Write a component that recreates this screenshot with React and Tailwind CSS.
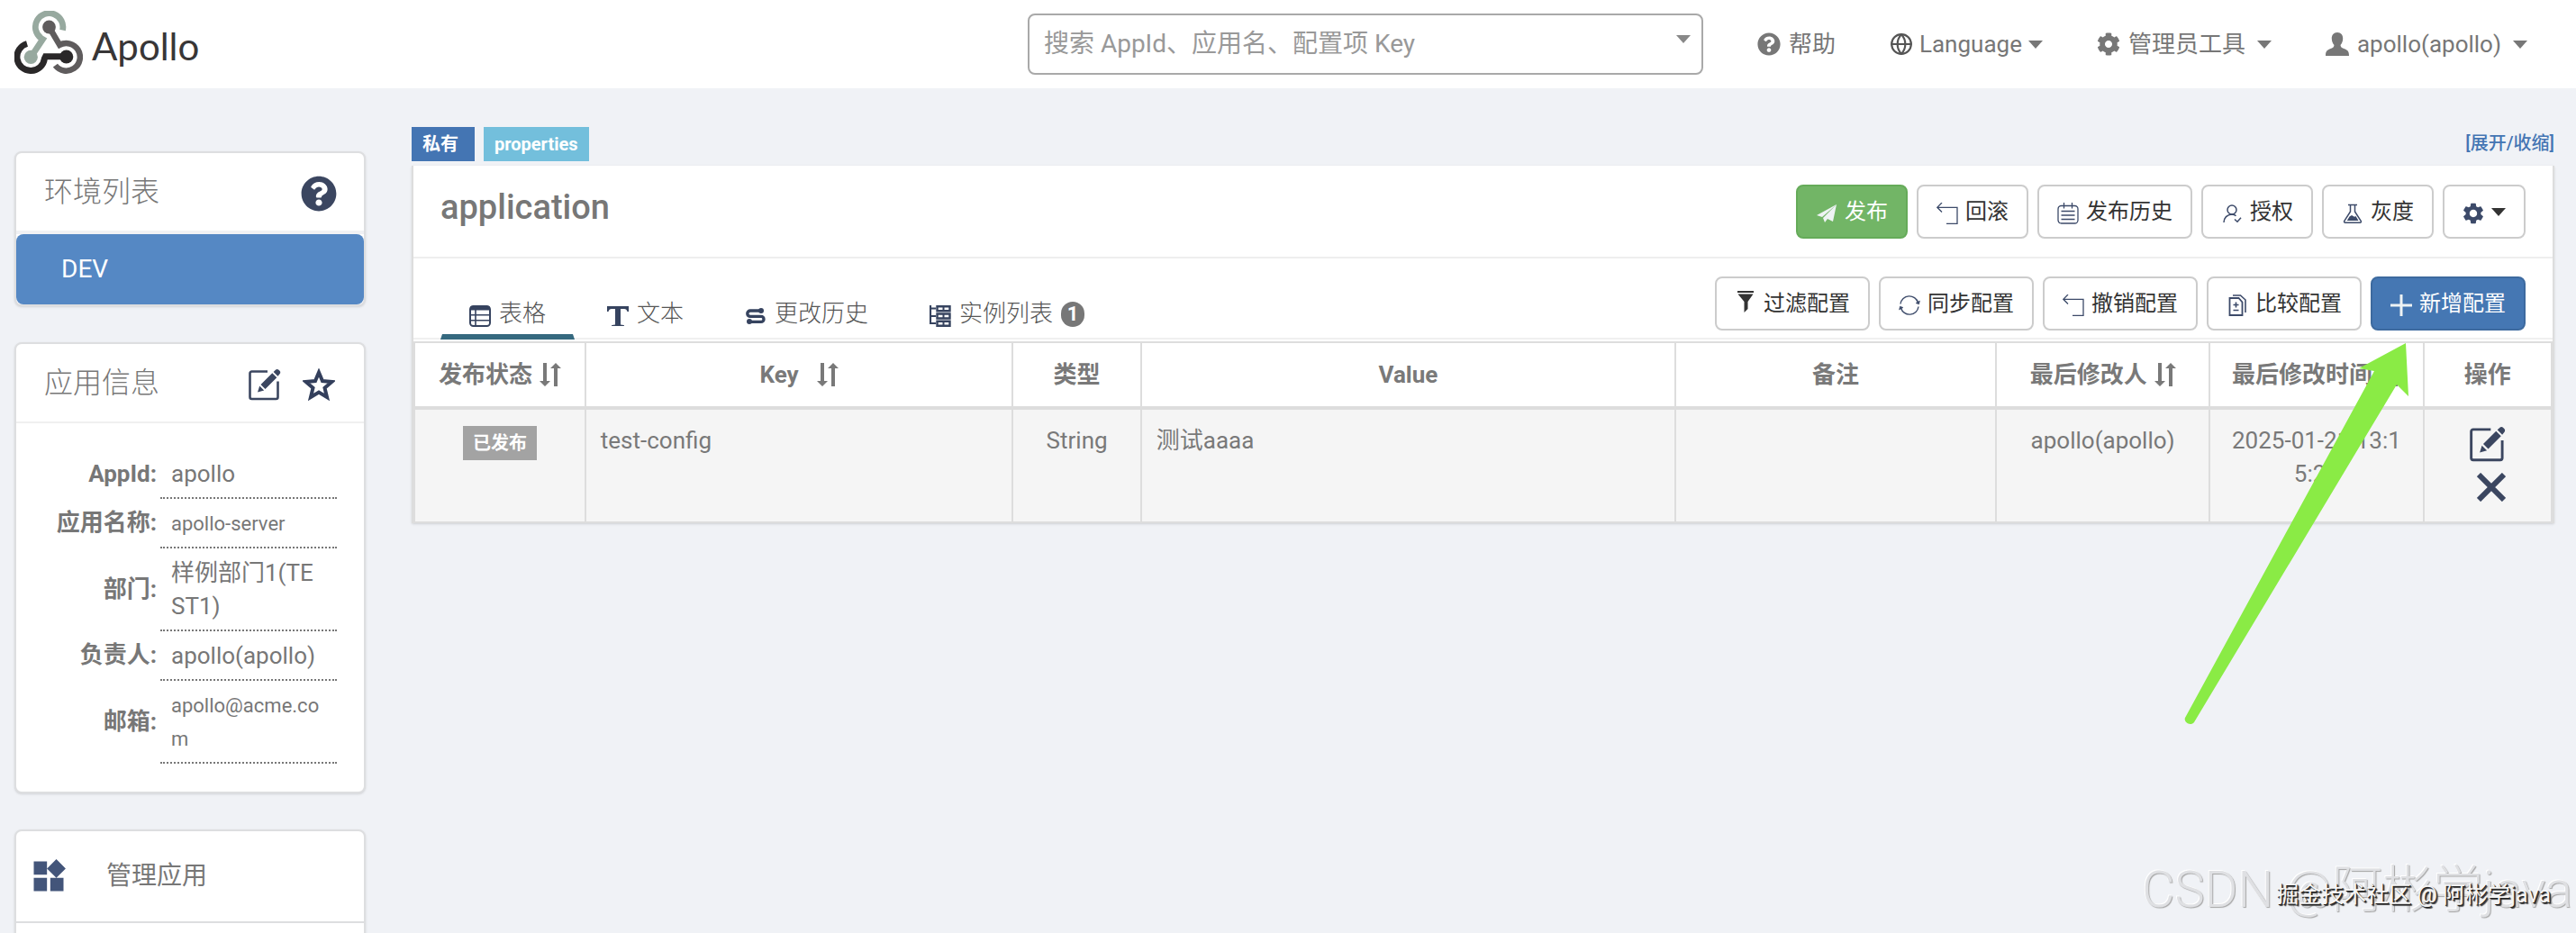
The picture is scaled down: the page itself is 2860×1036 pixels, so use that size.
import clsx from 'clsx';
import { Globe } from 'lucide-react';
import { FaCog, FaQuestionCircle } from 'react-icons/fa';
import { MdSettings, MdWidgets } from 'react-icons/md';

const Svg = ({ children, className = 'w-6 h-6', viewBox = '0 0 24 24' }) => (
    <svg viewBox={viewBox} className={clsx('shrink-0', className)} fill="none" stroke="currentColor" aria-hidden="true">
        {children}
    </svg>
);

const Caret = () => (
    <Svg viewBox="0 0 16 9" className="w-4 h-[9px]">
        <path d="M0 0h16L8 9z" fill="currentColor" stroke="none" />
    </Svg>
);

const Logo = () => (
    <Svg viewBox="0 0 76 70" className="w-[76px] h-[70px]">
        <path d="M14 36.5A15.3 15.3 0 1 0 33.4 53L34.5 50.8H57.7" stroke="#2a2829" strokeWidth="7" />
        <circle cx="57.7" cy="51" r="7.6" fill="#2a2829" stroke="none" />
        <path d="M45.4 60.6A15.3 15.3 0 1 0 50.2 37.9L38.5 18" stroke="#5f5c5d" strokeWidth="6.5" />
        <circle cx="38.5" cy="18" r="7.4" fill="#5f5c5d" stroke="none" />
        <path d="M53.5 21.5A15.3 15.3 0 1 0 29.5 30.3L31.5 31.5L18.3 51.3" stroke="#97a99f" strokeWidth="6.8" />
        <circle cx="18.3" cy="51.3" r="7.6" fill="#97a99f" stroke="none" />
    </Svg>
);

const UserIcon = () => (
    <Svg viewBox="0 0 26 26" className="w-[26px] h-[26px]">
        <path d="M13 0c4 0 6.4 3 6.2 7-.1 3-1.200 5.400-2.700 7 .2 2.400 1.500 3.200 4.500 4.300C24.500 19.800 26 21 26 26H0c0-5 1.500-6.200 5-7.700 3-1.100 4.300-1.900 4.500-4.300C8 12.400 6.900 10 6.800 7 6.600 3 9 0 13 0z" fill="currentColor" stroke="none" />
    </Svg>
);

const EditIcon = ({ className }) => (
    <Svg viewBox="0 0 36 36" className={className}>
        <path d="M21 3.500H3.500a2 2 0 0 0-2 2V32a2 2 0 0 0 2 2h27a2 2 0 0 0 2-2V14.500" strokeWidth="2.600" />
        <path d="M10 26.500l2.200-7 5 5zM13.500 18L26.300 5.200l5 5L18.500 23zM27.600 3.900l2.300-2.200c1-1 2.600-1 3.600 0l1 1c1 1 1 2.500 0 3.500l-2 2.600z" fill="currentColor" stroke="none" />
    </Svg>
);

const StarIcon = () => (
    <Svg viewBox="0 0 36 36" className="w-9 h-9">
        <path d="M18 4.500l4 9.600 10.500.8-8 6.900 2.500 10.200-9-5.500-9 5.500 2.500-10.200-8-6.900 10.500-.8z" strokeWidth="4" />
    </Svg>
);

const CloseIcon = () => (
    <Svg viewBox="0 0 32 32" className="w-8 h-8">
        <path d="M2 2l28 28M30 2L2 30" strokeWidth="6" />
    </Svg>
);

const SendIcon = () => (
    <Svg>
        <path d="M23 2L1 14l6 2zM23 2L8 17l2 5 3-4 6 3z" fill="currentColor" stroke="none" />
    </Svg>
);

const UndoIcon = () => (
    <Svg>
        <path d="M6 0L.8 5.300 6 10.500M1 5.300h22v18H11" strokeWidth="1.300" />
    </Svg>
);

const HistoryIcon = () => (
    <Svg>
        <rect x="1" y="3.500" width="22" height="19.500" rx="3.500" strokeWidth="1.300" />
        <path d="M7.500 0v6.500M16.500 0v6.500M4.500 9.500h15M4.500 14h15M4.500 18.500h15" strokeWidth="1.300" />
    </Svg>
);

const GrantIcon = () => (
    <Svg>
        <circle cx="12" cy="8" r="5" strokeWidth="1.500" />
        <path d="M3 22c.3-5 3-8.500 9-9 2 0 3.500.7 4.500 1.800M15 18.500l3 2.800 4-4.500" strokeWidth="1.500" />
    </Svg>
);

const FlaskIcon = () => (
    <Svg>
        <path d="M7 2.500h10M9.500 3v7L2.800 20.300c-.6 1 0 1.900 1 1.900h16.400c1 0 1.600-.9 1-1.900L14.500 10V3" strokeWidth="1.500" />
        <path d="M8.500 15.500l2.500-1.500 3 1.800 1.500-.8 3 5H5.800z" fill="currentColor" stroke="none" />
    </Svg>
);

const FilterIcon = () => (
    <Svg className="w-6 h-6 -mt-2 text-[#333]">
        <path d="M3 0h18v2H3zM3.500 3.500h17L14.500 12v8l-4 4V12z" fill="currentColor" stroke="none" />
    </Svg>
);

const SyncIcon = () => (
    <Svg>
        <path d="M2 10.500A10 10 0 0 1 21.500 9M22 13.500A10 10 0 0 1 2.500 15" strokeWidth="1.400" />
        <path d="M23.500 7l-1 4-3.500-1.500zM.5 17l1-4L5 14.500z" fill="currentColor" strokeWidth=".5" />
    </Svg>
);

const CompareIcon = () => (
    <Svg>
        <path d="M3.500 4h10l4 4.500V23h-14z" strokeWidth="1.800" />
        <path d="M7 1h8.500l5.500 5v14M10.500 8.500v6M7.500 11.500h6M7.500 17.500h6" strokeWidth="1.600" />
    </Svg>
);

const PlusIcon = () => (
    <Svg>
        <path d="M12 0v24M0 12h24" strokeWidth="3" />
    </Svg>
);

const TableIcon = () => (
    <Svg>
        <rect x="1" y="1" width="22" height="22" rx="3.500" strokeWidth="2" />
        <path d="M1 1.500h22v4H1z" fill="currentColor" stroke="none" />
        <path d="M7 5v18M1 10.800h22M1 16.800h22" strokeWidth="1.600" />
    </Svg>
);

const TextIcon = () => (
    <Svg>
        <path d="M0 1h24v6h-1.500c-.6-2-1.500-3-3.500-3h-4v17.500c1.500.2 2.500.5 4 .8V23H5v-.7c1.500-.3 2.500-.6 4-.8V4H5C3 4 2.100 5 1.500 7H0z" fill="currentColor" stroke="none" />
    </Svg>
);

const ChangeIcon = () => (
    <Svg>
        <path d="M18 6H6a3.200 3.200 0 0 0 0 6.400h12a3 3 0 0 1 0 6H5" strokeWidth="3.400" />
        <circle cx="18" cy="6" r="3" fill="currentColor" stroke="none" />
        <circle cx="5" cy="18" r="3" fill="currentColor" stroke="none" />
    </Svg>
);

const InstanceIcon = () => (
    <Svg>
        <path d="M1 0v21M1 3.500h6M1 12h6M1 20h6" strokeWidth="2.200" />
        <path d="M8.500 1.200h14v5h-14zM8.500 9.500h14v5h-14zM8.500 17.800h14v5h-14z" strokeWidth="2.400" />
        <path d="M15.500 1v5M15.500 9v6M15.500 17v6" strokeWidth="2" />
    </Svg>
);

const SortIcon = () => (
    <Svg viewBox="0 0 24 26" className="w-6 h-[26px]">
        <path d="M4 0h4v20h4l-6 6-6-6h4zM16 26h4V6h4l-6-6-6 6h4z" fill="currentColor" stroke="none" />
    </Svg>
);

const APP_INFO = [
    { label: 'AppId:', value: 'apollo' },
    { label: '应用名称:', value: 'apollo-server', small: true },
    { label: '部门:', value: '样例部门1(TEST1)' },
    { label: '负责人:', value: 'apollo(apollo)' },
    { label: '邮箱:', value: 'apollo@acme.com', small: true },
];

const TABS = [
    { name: '表格', icon: <TableIcon />, active: true },
    { name: '文本', icon: <TextIcon /> },
    { name: '更改历史', icon: <ChangeIcon /> },
    { name: '实例列表', icon: <InstanceIcon />, badge: 1 },
];

const COLUMNS = [
    { name: '发布状态', width: 'w-[8%]', gap: 'gap-2', sort: true },
    { name: 'Key', width: 'w-[20%]', gap: 'gap-5', sort: true },
    { name: '类型', width: 'w-[6%]' },
    { name: 'Value', width: 'w-[25%]' },
    { name: '备注', width: 'w-[15%]' },
    { name: '最后修改人', width: 'w-[10%]', gap: 'gap-2', sort: true },
    { name: '最后修改时间', width: 'w-[10%]', gap: 'gap-2', sort: true },
    { name: '操作', width: 'w-[6%]' },
];

const BUTTON_STYLES = {
    default: 'bg-white border-[#ccc] text-[#333]',
    success: 'bg-[#72b566] border-[#65ab59] text-white',
    primary: 'bg-[#4577b3] border-[#3d6a9f] text-white',
};

function Button({ icon, children, variant = 'default', label }) {
    return (
        <button
            type="button"
            aria-label={label}
            className={clsx(
                'flex items-center gap-2 h-[60px] px-5 rounded-lg border-2 text-[24px] leading-8 whitespace-nowrap cursor-pointer',
                BUTTON_STYLES[variant]
            )}
        >
            <span className={clsx('mt-1', variant === 'default' ? 'text-[#3c4a69]' : 'text-[#eef3f4]')}>{icon}</span>
            {children}
        </button>
    );
}

function Card({ children }) {
    return <section className="bg-white border-2 border-[#dddee0] rounded-lg shadow-sm">{children}</section>;
}

function Header() {
    return (
        <header className="flex items-center h-[98px] pl-4 pr-[54px] bg-white">
            <a href="#" className="flex items-center gap-[10px] -mt-1">
                <Logo />
                <span className="text-[42px] leading-none mt-2 text-[#383637] [font-family:Lato,sans-serif]">Apollo</span>
            </a>
            <nav className="flex items-center gap-[60px] ml-auto text-[26px] leading-9 text-[#777]">
                <div className="relative">
                    <select
                        aria-label="搜索"
                        className="appearance-none w-[750px] h-[68px] px-4 rounded-lg border-2 border-[#a9a9a9] bg-white text-[28px] text-[#999]"
                    >
                        <option>搜索 AppId、应用名、配置项 Key</option>
                    </select>
                    <span className="absolute right-[14px] top-6 flex text-[#888]"><Caret /></span>
                </div>
                <a href="#" className="flex items-center gap-[9px]">
                    <FaQuestionCircle className="w-[26px] h-[26px]" />
                    帮助
                </a>
                <a href="#" className="flex items-center gap-[7px]">
                    <Globe className="w-[26px] h-[26px] text-[#555]" />
                    Language
                    <Caret />
                </a>
                <a href="#" className="flex items-center gap-[9px]">
                    <FaCog className="w-[26px] h-[26px]" />
                    管理员工具
                    <span className="pl-1"><Caret /></span>
                </a>
                <a href="#" className="flex items-center gap-[9px]">
                    <UserIcon />
                    apollo(apollo)
                    <span className="pl-1"><Caret /></span>
                </a>
            </nav>
        </header>
    );
}

function Sidebar() {
    return (
        <aside className="flex flex-col gap-10 w-[390px] shrink-0 mt-[27px] text-[#777]">
            <Card>
                <div className="flex items-center justify-between h-[86px] pl-[31px] pr-[30px]">
                    <h2 className="text-[32px] font-light">环境列表</h2>
                    <FaQuestionCircle className="w-10 h-10 mt-1 text-[#3b4660]" />
                </div>
                <div className="border-t-4 border-[#f0f1f4]">
                    <a href="#" className="flex items-center h-[78px] pl-[50px] rounded-lg bg-[#5588c4] text-white text-[28px]">DEV</a>
                </div>
            </Card>

            <Card>
                <div className="flex items-center h-[88px] pl-[31px] pr-8 border-b-2 border-[#f0f0f0]">
                    <h2 className="text-[32px] font-light mr-auto">应用信息</h2>
                    <button type="button" aria-label="编辑" className="mt-1 text-[#3b4660]"><EditIcon className="w-9 h-9" /></button>
                    <button type="button" aria-label="收藏" className="mt-1 ml-6 text-[#333f5c]"><StarIcon /></button>
                </div>
                <table className="w-[326px] mt-[29px] mb-[31px] ml-[30px] text-[26px] leading-[37px]">
                    <tbody>
                        {APP_INFO.map((row) => (
                            <tr key={row.label}>
                                <th className="w-[130px] pr-1 text-right font-bold whitespace-nowrap">{row.label}</th>
                                <td className={clsx('px-3 pt-[9px] pb-[7px] border-b-2 border-dotted border-[#777] break-all', row.small && 'text-[22px]')}>
                                    {row.value}
                                </td>
                            </tr>
                        ))}
                    </tbody>
                </table>
            </Card>

            <Card>
                <a href="#" className="flex items-center h-[102px] pl-[14px] border-b-2 border-[#dddee0] text-[28px]">
                    <MdWidgets className="w-[44px] h-[44px] text-[#43557a]" />
                    <span className="ml-[42px]">管理应用</span>
                </a>
                <div className="h-[102px]" />
            </Card>
        </aside>
    );
}

function ConfigTable() {
    return (
        <table className="table-fixed w-full mt-[2px] border-2 border-[#dddddd] text-[26px] leading-[37px] text-[#797979]">
            <thead>
                <tr className="h-[73px] border-b-4 border-[#dddddd]">
                    {COLUMNS.map((col) => (
                        <th key={col.name} className={clsx('border-x-2 border-[#dddddd] font-bold whitespace-nowrap', col.width)}>
                            <span className={clsx('flex items-center justify-center', col.gap)}>
                                {col.name}
                                {col.sort && <SortIcon />}
                            </span>
                        </th>
                    ))}
                </tr>
            </thead>
            <tbody>
                <tr className="h-[127px] bg-[#f5f5f5] align-top *:border-x-2 *:border-[#dddddd] *:py-4">
                    <td className="text-center">
                        <span className="inline-flex items-center h-[38px] px-[11px] mt-[2px] bg-[#a3a3a3] text-white text-[20px] font-bold">已发布</span>
                    </td>
                    <td className="px-4">test-config</td>
                    <td className="text-center">String</td>
                    <td className="px-4">测试aaaa</td>
                    <td />
                    <td className="text-center">apollo(apollo)</td>
                    <td className="px-5 text-center break-all">2025-01-21 13:15:20</td>
                    <td className="text-[#3b4660]">
                        <div className="flex flex-col items-end gap-3 w-10 mx-auto mt-[2px]">
                            <button type="button" aria-label="修改"><EditIcon className="w-10 h-10" /></button>
                            <button type="button" aria-label="删除"><CloseIcon /></button>
                        </div>
                    </td>
                </tr>
            </tbody>
        </table>
    );
}

function Namespace() {
    return (
        <main className="grow min-w-0">
            <div className="flex items-start h-[43px] text-[20px] font-bold">
                <span className="flex items-center h-[38px] pl-3 pr-[18px] bg-[#4475b3] text-white">私有</span>
                <span className="flex items-center h-[38px] px-3 ml-[10px] bg-[#73bfdc] text-white">properties</span>
                <a href="#" className="ml-auto leading-9 font-medium text-[#4475b3]">[展开/收缩]</a>
            </div>

            <section className="bg-white border-x-2 border-[#dddddd] shadow-sm">
                <div className="flex items-start gap-[10px] pt-[21px] pb-5 px-[30px] border-b-2 border-[#eeeeee]">
                    <h1 className="mr-auto text-[38px] leading-[50px] font-medium text-[#777]">application</h1>
                    <Button icon={<SendIcon />} variant="success">发布</Button>
                    <Button icon={<UndoIcon />}>回滚</Button>
                    <Button icon={<HistoryIcon />}>发布历史</Button>
                    <Button icon={<GrantIcon />}>授权</Button>
                    <Button icon={<FlaskIcon />}>灰度</Button>
                    <Button icon={<MdSettings className="w-7 h-7 -mx-[2px]" />} label="设置"><Caret /></Button>
                </div>

                <div className="flex items-end pt-5 px-[30px] border-b-2 border-[#f0f0f0]">
                    <div className="flex gap-1 mr-auto -mb-[2px]">
                        {TABS.map((tab) => (
                            <a
                                key={tab.name}
                                href="#"
                                className={clsx(
                                    'flex items-center gap-[9px] px-[30px] pb-1 border-x-2 border-b-6 border-x-transparent text-[26px] leading-[37px] font-light text-[#555]',
                                    tab.active ? 'border-b-[#35697f]' : 'border-b-transparent'
                                )}
                            >
                                <span className="mt-1 text-[#36435f]">{tab.icon}</span>
                                {tab.name}
                                {tab.badge && (
                                    <span className="flex items-center justify-center w-[26px] h-7 rounded-full bg-[#777] text-white text-[22px] font-bold">{tab.badge}</span>
                                )}
                            </a>
                        ))}
                    </div>
                    <div className="flex gap-[10px] pb-2">
                        <Button icon={<FilterIcon />}>过滤配置</Button>
                        <Button icon={<SyncIcon />}>同步配置</Button>
                        <Button icon={<UndoIcon />}>撤销配置</Button>
                        <Button icon={<CompareIcon />}>比较配置</Button>
                        <Button icon={<PlusIcon />} variant="primary">新增配置</Button>
                    </div>
                </div>

                <ConfigTable />
            </section>
        </main>
    );
}

export default function App() {
    return (
        <div className="relative h-screen overflow-hidden bg-[#f0f2f6] [font-family:Roboto,'Noto_Sans_CJK_SC',sans-serif]">
            <Header />
            <div className="flex items-start gap-[51px] pt-[43px] pl-4 pr-6">
                <Sidebar />
                <Namespace />
            </div>

            {/* Arrow pointing at the add button */}
            <svg viewBox="0 0 260 430" className="absolute top-[378px] right-[180px] w-[260px] h-[430px] pointer-events-none" aria-hidden="true">
                <path d="M251 3L199 31l17 3L6 419c-2 5 6 10 10 5L241 49l13 13z" fill="#8aeb45" />
            </svg>

            {/* Watermarks */}
            <p className="absolute right-1 bottom-2 text-[56px] leading-[80px] font-light whitespace-nowrap text-[#dfe0e3] [text-shadow:1px_1px_1px_#a5a5a5,-1px_-1px_0_#ffffff]">
                CSDN @阿彬学java
            </p>
            <p className="absolute right-7 bottom-6 text-[25px] leading-9 whitespace-nowrap text-[#f5f5f5] [text-shadow:1px_1px_0_#222222,2px_2px_1px_#333333]">
                掘金技术社区 @ 阿彬学java
            </p>
        </div>
    );
}
